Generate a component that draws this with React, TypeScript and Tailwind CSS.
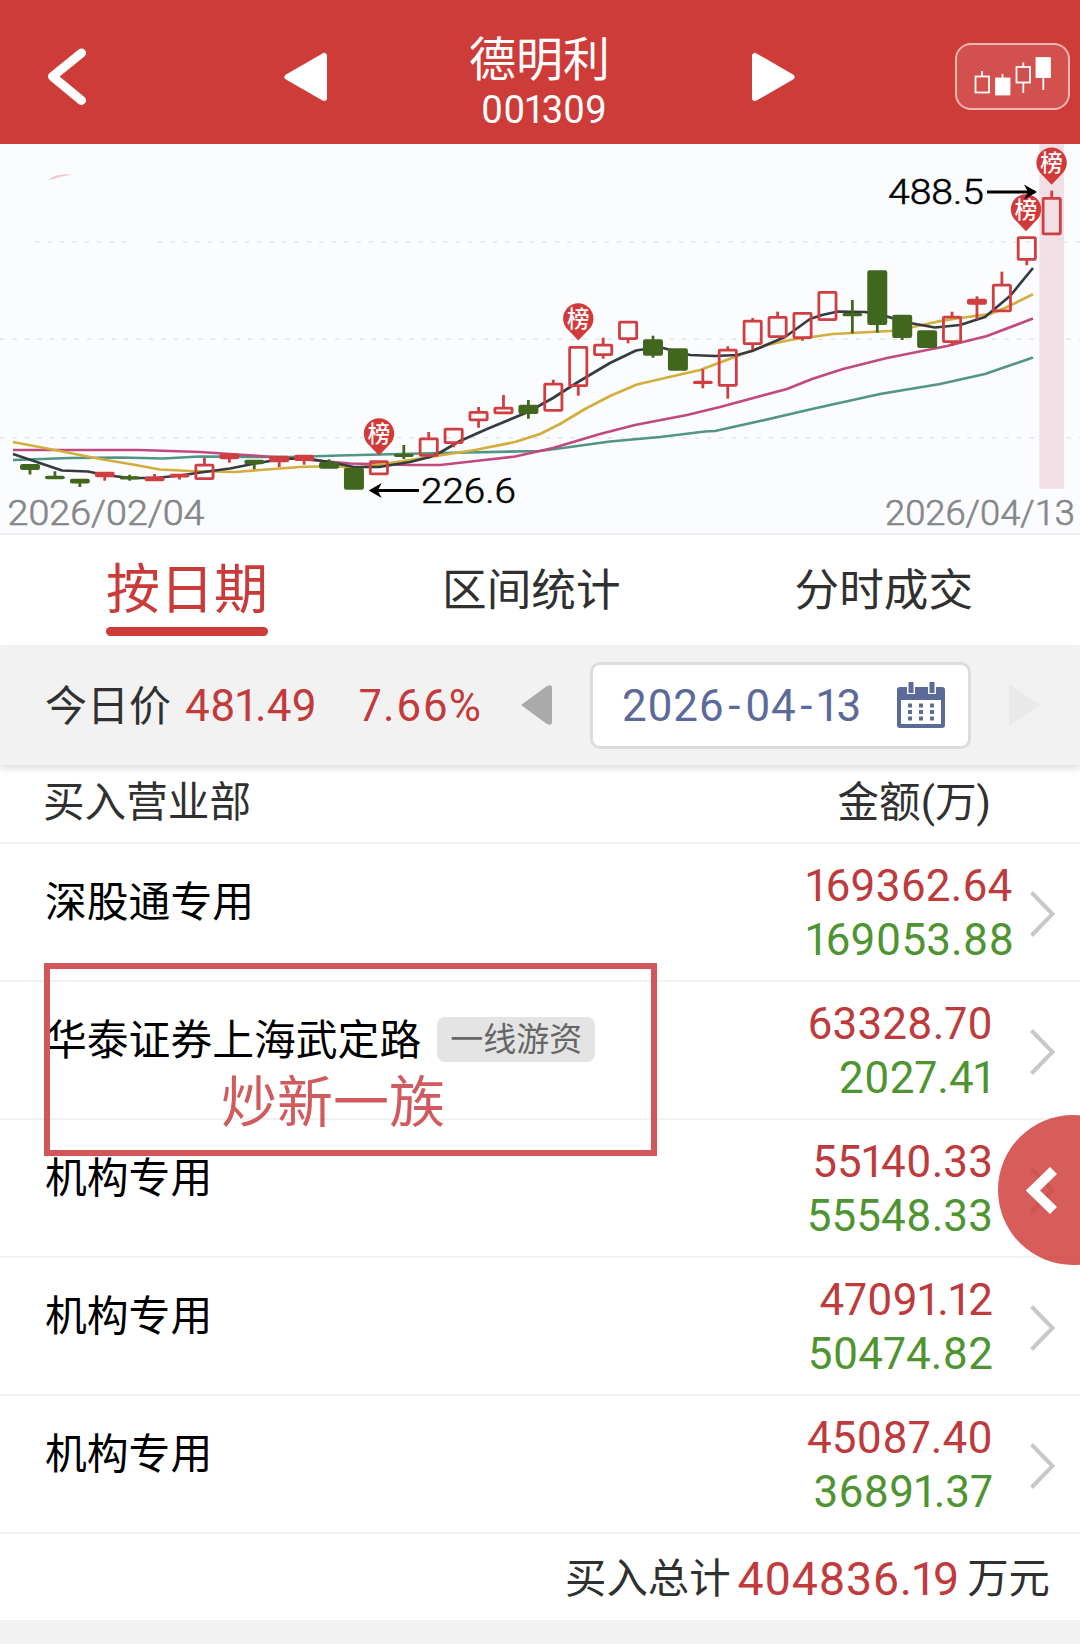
import clsx from 'clsx';

type Candle = {
  kind: 'up' | 'flat' | 'down';
  open: number;
  close: number;
  high?: number;
  low?: number;
};

// pixel rows of every daily candle, oldest first
const candles: Candle[] = [
  { kind: 'down', open: 464, close: 470, low: 474.5 },
  { kind: 'down', open: 475.7, close: 479.3, high: 471.3 },
  { kind: 'down', open: 478.7, close: 483.5, low: 487 },
  { kind: 'flat', open: 471.7, close: 477.3, low: 480.7 },
  { kind: 'down', open: 476.3, close: 479.3, high: 474.7, low: 480.7 },
  { kind: 'flat', open: 476.5, close: 481.3, high: 474 },
  { kind: 'flat', open: 473.7, close: 477.5, low: 479.5 },
  { kind: 'up', open: 463.7, close: 480, high: 458 },
  { kind: 'flat', open: 453.5, close: 459.3, low: 462.7 },
  { kind: 'down', open: 459.7, close: 464.3, low: 469.3 },
  { kind: 'flat', open: 455.7, close: 462.3, low: 467 },
  { kind: 'flat', open: 454.7, close: 461, low: 464.7 },
  { kind: 'down', open: 462, close: 468.7, high: 459.3 },
  { kind: 'down', open: 467.7, close: 489.7 },
  { kind: 'up', open: 460.3, close: 475.3 },
  { kind: 'down', open: 453.7, close: 457, high: 445, low: 459 },
  { kind: 'up', open: 437.5, close: 456.7, high: 432 },
  { kind: 'up', open: 427.7, close: 444, low: 447.3 },
  { kind: 'up', open: 411, close: 421.3, high: 407, low: 427.7 },
  { kind: 'up', open: 406.7, close: 414.3, high: 395 },
  { kind: 'down', open: 404.7, close: 414, high: 400, low: 418.7 },
  { kind: 'up', open: 382.7, close: 411.7, high: 379.7 },
  { kind: 'up', open: 346, close: 387, low: 395.7 },
  { kind: 'up', open: 343.7, close: 356, high: 337.7, low: 358.7 },
  { kind: 'up', open: 320.7, close: 340, low: 343.3 },
  { kind: 'down', open: 339.3, close: 355.7, high: 335.7, low: 357.7 },
  { kind: 'down', open: 348.3, close: 370.7 },
  { kind: 'flat', open: 380.8, close: 383.8, high: 369.3, low: 388.3 },
  { kind: 'up', open: 348.7, close: 386.7, high: 346.3, low: 398.7 },
  { kind: 'up', open: 319.7, close: 345, high: 318, low: 349.7 },
  { kind: 'up', open: 316, close: 338, high: 311.7 },
  { kind: 'up', open: 312, close: 339, low: 340.7 },
  { kind: 'up', open: 291, close: 321 },
  { kind: 'down', open: 313, close: 315.5, high: 300, low: 333.3 },
  { kind: 'down', open: 270.3, close: 325, low: 332.7 },
  { kind: 'down', open: 314.7, close: 338, low: 340 },
  { kind: 'down', open: 330.3, close: 348 },
  { kind: 'up', open: 315.7, close: 343, high: 311.7, low: 346 },
  { kind: 'flat', open: 298.7, close: 304.7, high: 296.3, low: 319.3 },
  { kind: 'up', open: 283.7, close: 312.3, high: 271.7 },
  { kind: 'up', open: 236.3, close: 260.7, low: 265.3 },
  { kind: 'up', open: 197, close: 235.3, high: 190.7 },
];

const averages = [
  {
    color: '#519585',
    points:
      '13,460 70,458 120,457.5 163,458.5 200,456.5 290,457 340,455.5 440,453 540,451 570,447 610,441.5 660,437 705,431.5 715,431 760,421 812,409 880,394 940,384 985,374 1033,357.5',
  },
  {
    color: '#c04a80',
    points:
      '13,450 140,450 200,452 260,456 310,460 350,463.5 410,465 440,465 480,460.5 515,456.5 553,448 600,434 635,425 687,415 720,407 787,389 812,379 843,369 887,358 947,346 987,336 1033,318.5',
  },
  {
    color: '#d3ae3c',
    points:
      '13,442 60,451 100,459 130,464 160,469.5 190,471 235,472 260,470 300,467 333,466 354,468 390,463 430,457 475,450 515,442 540,434 560,424 585,409 610,396 637,384.5 665,378 700,370 740,355 767,345 790,340 833,334 890,331 913,327 937,321.7 960,318 990,314 1005,308 1033,294.3',
  },
  {
    color: '#363b40',
    points:
      '13,454 62,470.5 88,471.5 105,475 130,478 155,478 180,475.5 204,472 230,468.5 255,463.5 279,459.5 304,458 329,462 354,467 379,467 410,462 430,457 441,452 460,441 487,429 528,412 553,398 578,382 610,363 636,350.5 652,348 663,348 690,355 715,356 737,355 752,351 785,337 810,319 822,315 838,311.5 865,312 885,316 910,323 935,327.5 960,325 985,317 1010,296 1033,268',
  },
];

const pins = [
  { x: 379, y: 433.5 },
  { x: 578.3, y: 318.5 },
  { x: 1026, y: 209.3 },
  { x: 1051.6, y: 162.7 },
];

const rows = [
  { name: '深股通专用', buy: '169362.64', sell: '169053.88' },
  {
    name: '华泰证券上海武定路',
    tag: '一线游资',
    buy: '63328.70',
    sell: '2027.41',
  },
  { name: '机构专用', buy: '55140.33', sell: '55548.33' },
  { name: '机构专用', buy: '47091.12', sell: '50474.82' },
  { name: '机构专用', buy: '45087.40', sell: '36891.37' },
];

function CandleShape({ candle, x }: { candle: Candle; x: number }) {
  const { kind, open, close, high, low } = candle;
  const color = kind === 'down' ? '#41671f' : '#cf3f42';
  return (
    <g stroke={color} strokeWidth={2.8}>
      {high && <path d={`M${x} ${high}V${open + 1}`} />}
      {low && <path d={`M${x} ${close - 1}V${low}`} />}
      <rect
        x={x - 8.6}
        y={open + 1.4}
        width={17.2}
        height={Math.max(close - open - 2.8, 0.4)}
        rx={0.8}
        fill={kind === 'up' ? 'none' : color}
      />
    </g>
  );
}

function Pin({ x, y }: { x: number; y: number }) {
  return (
    <g>
      <path
        d={`M${x} ${y + 22}L${x - 10} ${y + 11.5}A15.2 15.2 0 1 1 ${x + 10} ${y + 11.5}Z`}
        fill="#d23a3a"
      />
      <text
        x={x}
        y={y + 8.3}
        textAnchor="middle"
        fontSize={22.5}
        fontWeight={500}
        fill="#fff"
      >
        榜
      </text>
    </g>
  );
}

function Chart() {
  return (
    <svg
      viewBox="0 144 1080 389"
      className="block h-[389px] w-full bg-[#fbfcfe]"
      fill="none"
    >
      <path d="M48 180.5Q55 173 72 174.5Q60 176.5 48 180.5Z" fill="#efc8d2" />
      <g stroke="#e2e4e6" strokeWidth={1.4} strokeDasharray="4.5 7.9">
        <path d="M35 242H129" />
        <path d="M158 242H1080" />
        <path d="M0 339.2H1080" />
        <path d="M0 437.7H1080" />
      </g>
      <rect x={1039.3} y={144} width={24.7} height={344.7} fill="#f1dfe5" />
      {averages.map((line) => (
        <polyline
          key={line.color}
          points={line.points}
          stroke={line.color}
          strokeWidth={2.7}
          strokeLinejoin="round"
        />
      ))}
      {candles.map((candle, i) => (
        <CandleShape key={i} candle={candle} x={30 + i * 24.92} />
      ))}
      {pins.map((pin) => (
        <Pin key={pin.x} x={pin.x} y={pin.y} />
      ))}
      <g stroke="#000" strokeWidth={3}>
        <path d="M987 192H1035" />
        <path d="M419 490.5H371" />
      </g>
      <path d="M1037 192L1024 184.5L1028 192L1024 199.5Z" fill="#000" />
      <path d="M368.7 490.5L381.7 483L377.7 490.5L381.7 498Z" fill="#000" />
      <g
        fontSize={34.5}
        fontWeight={300}
        fill="#000"
        stroke="#000"
        strokeWidth={0.5}
      >
        <text
          x={888}
          y={204.3}
          textLength={96}
          lengthAdjust="spacingAndGlyphs"
        >
          488.5
        </text>
        <text
          x={421}
          y={503.3}
          textLength={95}
          lengthAdjust="spacingAndGlyphs"
        >
          226.6
        </text>
      </g>
      <g
        fontSize={34.5}
        fontWeight={300}
        fill="#858688"
        stroke="#858688"
        strokeWidth={0.6}
      >
        <text
          x={7.5}
          y={525.3}
          textLength={197}
          lengthAdjust="spacingAndGlyphs"
        >
          2026/02/04
        </text>
        <text
          x={885}
          y={525.3}
          textLength={190}
          lengthAdjust="spacingAndGlyphs"
        >
          2026/04/13
        </text>
      </g>
    </svg>
  );
}

function Header() {
  return (
    <header className="flex h-36 items-center bg-[#ce3c39] text-white">
      <svg
        className="mt-2.5 ml-12 h-[58px] w-10"
        viewBox="0 0 40 58"
        fill="none"
      >
        <path
          d="M33.5 5L4.5 28.5L33.5 52.5"
          stroke="#fff"
          strokeWidth={9}
          strokeLinecap="round"
          strokeLinejoin="round"
        />
      </svg>
      <svg className="mt-2.5 ml-[196px] h-[50px] w-11" viewBox="0 0 44 50">
        <path
          d="M3.5 25L40 4V46Z"
          fill="#fff"
          stroke="#fff"
          strokeWidth={6}
          strokeLinejoin="round"
        />
      </svg>
      <div className="flex w-[423px] flex-col items-center pt-[26px]">
        <h1 className="text-[47px] leading-[50px]">德明利</h1>
        <p className="ml-[9px] text-[38px] leading-[50px] proportional-nums">
          001309
        </p>
      </div>
      <svg className="mt-2.5 h-[50px] w-11" viewBox="0 0 44 50">
        <path
          d="M40.5 25L4 4V46Z"
          fill="#fff"
          stroke="#fff"
          strokeWidth={6}
          strokeLinejoin="round"
        />
      </svg>
      <button className="mt-[9px] ml-[160px] h-[67px] w-[115px] rounded-2xl border-2 border-[#efb5b1] bg-[#d2504d]">
        <svg
          viewBox="957 45 111 63"
          className="h-[63px] w-[111px]"
          stroke="#fff"
          strokeWidth={1.8}
          fill="none"
        >
          <rect x={975.5} y={76.5} width={13.5} height={16} />
          <path d="M982 71V76" />
          <rect x={996} y={78.5} width={13.5} height={16} fill="#fff" />
          <path d="M1002.5 74V79" />
          <rect x={1016.5} y={67} width={13.5} height={15.5} />
          <path d="M1023.3 62.5V67M1023.3 83V93" />
          <rect x={1036.5} y={58} width={13.5} height={19} fill="#fff" />
          <path d="M1043.3 77V90" />
        </svg>
      </button>
    </header>
  );
}

function CalendarIcon() {
  return (
    <svg className="h-[46px] w-12" viewBox="0 0 48 46" fill="none">
      <path
        d="M3 5H45Q48 5 48 8V43Q48 46 45 46H3Q0 46 0 43V8Q0 5 3 5Z"
        fill="#5c6a9a"
      />
      <path d="M4 18H44V42H4Z" fill="#fff" />
      <path d="M10 0H18V12H10ZM31 0H39V12H31Z" fill="#fff" />
      <path d="M11.5 0H16.5V11H11.5ZM32.5 0H37.5V11H32.5Z" fill="#5c6a9a" />
      <path
        d="M11 23.5H15M22 23.5H26M33 23.5H37M11 30H15M22 30H26M33 30H37M11 36.5H15M22 36.5H26M33 36.5H37"
        stroke="#5c6a9a"
        strokeWidth={4}
      />
    </svg>
  );
}

function DateBar() {
  return (
    <section className="relative flex h-[120px] items-center bg-[#f2f2f2] shadow-[0_4px_7px_rgba(0,0,0,0.12)]">
      <span className="mt-[3px] ml-[45px] text-[42px] leading-[60px] text-[#303030]">
        今日价
      </span>
      <span className="mt-0.5 ml-3.5 w-[174px] text-[44px] leading-[60px] tracking-[0.2px] text-[#c23a3b] proportional-nums">
        481.49
      </span>
      <span className="mt-0.5 w-[162px] text-[44px] leading-[60px] tracking-[1.3px] text-[#c23a3b] proportional-nums">
        7.66%
      </span>
      <svg className="h-10 w-[31px]" viewBox="0 0 31 40">
        <path d="M0 20L26 1Q31 -1 31 3V37Q31 41 26 39Z" fill="#aaa" />
      </svg>
      <div className="ml-[38px] flex h-[87px] w-[381px] items-center justify-between rounded-[10px] border-[3px] border-[#dcdcdc] bg-white pr-[23px] pl-[29px]">
        <span className="mt-0.5 text-[44px] leading-[60px] tracking-[0.5px] text-[#5c6a9a] proportional-nums">
          2026<span className="px-1">-</span>04<span className="px-1">-</span>
          13
        </span>
        <CalendarIcon />
      </div>
      <svg className="ml-[38px] h-[42px] w-[31px]" viewBox="0 0 31 42">
        <path d="M0 0L31 21L0 42Z" fill="#e9e9e9" />
      </svg>
    </section>
  );
}

function Row({ row }: { row: (typeof rows)[number] }) {
  return (
    <li className="flex h-[138px] border-b-2 border-[#f1f1f2] pl-[45px]">
      <div className="flex h-[114px] flex-1 items-center">
        <span className="mt-[3px] text-[41.8px] leading-[60px] text-black">
          {row.name}
        </span>
        {row.tag && (
          <span className="ml-4 rounded-lg bg-[#e4e4e4] px-[13px] text-[33px] leading-[45px] text-[#666]">
            {row.tag}
          </span>
        )}
      </div>
      <div className="w-[187px] pt-[15px] text-right text-[44px] leading-[54px] tracking-[0.1px] whitespace-nowrap proportional-nums">
        <p className="text-[#bd3b3c]">{row.buy}</p>
        <p className="text-[#4e9430]">{row.sell}</p>
      </div>
      <svg
        className="mt-[47px] mr-6 ml-[37px] h-[46px] w-[26px]"
        viewBox="0 0 26 46"
        fill="none"
      >
        <path d="M1.5 1.5L22.5 23L1.5 44.5" stroke="#c8c8c8" strokeWidth={4} />
      </svg>
    </li>
  );
}

export default function App() {
  const tabs = ['按日期', '区间统计', '分时成交'];

  return (
    <div className="relative h-[1644px] w-[1080px] overflow-hidden bg-[#f2f2f2] font-['Roboto','Noto_Sans_CJK_SC',sans-serif]">
      <Header />
      <Chart />
      <nav className="flex h-[112px] justify-between border-t-2 border-[#eceef3] bg-white pr-[107px] pl-[106px]">
        {tabs.map((tab, i) => (
          <button
            key={tab}
            className={clsx(
              'flex flex-col items-center',
              i === 0
                ? 'text-[54px] text-[#c93a38]'
                : 'text-[44.6px] text-[#303030]'
            )}
          >
            <span className="mt-6 leading-[64px]">{tab}</span>
            {i === 0 && (
              <span className="mt-1 h-[9px] w-[162px] rounded-full bg-[#ce3c39]" />
            )}
          </button>
        ))}
      </nav>
      <DateBar />
      <main className="bg-white">
        <div className="flex h-[79px] justify-between border-b-2 border-[#f1f1f2] pt-[3px] pr-[89px] pl-[43px] text-[41.6px] leading-[70px] text-[#303030]">
          <span>买入营业部</span>
          <span>金额(万)</span>
        </div>
        <ul>
          {rows.map((row, i) => (
            <Row key={i} row={row} />
          ))}
        </ul>
        <div className="flex h-[86px] items-center justify-end pt-[3px] pr-[30px] text-[41.4px] leading-[60px] text-[#303030]">
          <span>买入总计</span>
          <span className="mr-[7px] ml-[7px] text-[46.5px] tracking-[0.5px] text-[#c23a3b] proportional-nums">
            404836.19
          </span>
          <span>万元</span>
        </div>
      </main>

      {/* marked seat */}
      <div className="absolute top-[963px] left-11 h-[193px] w-[613px] border-[6px] border-[#d2575b]">
        <p className="mt-[101px] ml-[171px] text-[56px] leading-[66px] text-[#d05a5d]">
          炒新一族
        </p>
      </div>

      <button className="absolute top-[1115px] left-[998px] h-[150px] w-[150px] rounded-full bg-[#ce3c39]/83">
        <svg className="ml-7 h-[50px] w-9" viewBox="0 0 36 50" fill="none">
          <path d="M27.5 5.5L7 25.5L27.5 45.5" stroke="#fff" strokeWidth={10} />
        </svg>
      </button>
    </div>
  );
}
